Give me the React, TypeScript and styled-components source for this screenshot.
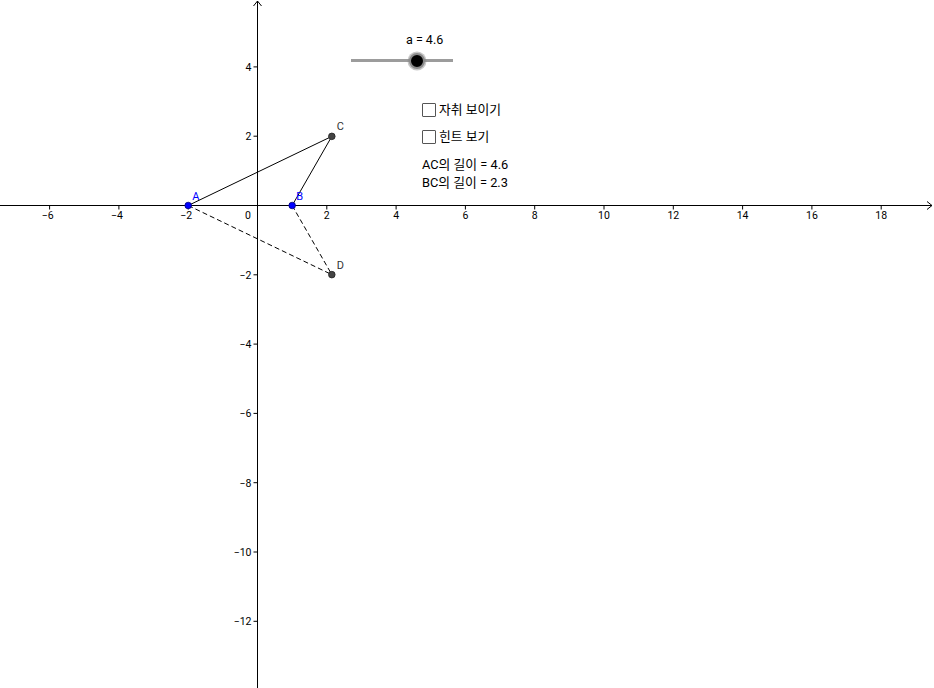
import React from "react"
import styled, { createGlobalStyle } from "styled-components"

const GlobalStyle = createGlobalStyle`
  html, body {
    margin: 0;
    padding: 0;
    background: #fff;
    overflow: hidden;
  }
  body {
    font-family: Roboto, "Noto Sans CJK KR", sans-serif;
  }
`

const Applet = styled.div`
  position: relative;
  width: 934px;
  height: 688px;
  background: #fff;
  overflow: hidden;
`

const Board = styled.svg`
  display: block;
  font-family: Roboto, "Noto Sans CJK KR", sans-serif;
`

const Widget = styled.div<{ $x: number; $y: number }>`
  position: absolute;
  left: ${({ $x }) => $x}px;
  top: ${({ $y }) => $y}px;
  font-size: 12.5px;
  color: #000;
  line-height: 14px;
  white-space: nowrap;
`

const SliderLabel = styled.div`
  padding-left: 55px;
  margin-bottom: 12px;
`

const SliderTrack = styled.div`
  position: relative;
  width: 102px;
  height: 3px;
  background: #9c9c9c;
`

const SliderKnob = styled.div`
  position: absolute;
  top: 50%;
  width: 12px;
  height: 12px;
  border-radius: 50%;
  background: #000;
  border: 2px solid #8a8a8a;
  box-shadow: 0 0 0 1.5px rgba(130, 130, 130, 0.45);
  transform: translate(-50%, -50%);
`

const CheckRow = styled.label`
  display: flex;
  align-items: center;
  gap: 3px;
  font-size: 12.8px;
`

const Box = styled.span`
  display: inline-block;
  width: 12px;
  height: 12px;
  border: 1px solid #555;
  border-radius: 1px;
  background: #fff;
`

const InfoList = styled.div`
  display: flex;
  flex-direction: column;
  gap: 4px;
  font-size: 12.8px;
`

// graph coords
const ox = 257.5
const oy = 205.5
const s = 34.65
const px = (x: number) => ox + x * s
const py = (y: number) => oy - y * s

const fmt = (n: number) => (n < 0 ? "\u2212" + Math.abs(n) : String(n))

const A = { x: -2, y: 0 }
const B = { x: 1, y: 0 }
const C = { x: 2.145, y: 1.995 }
const D = { x: 2.145, y: -1.995 }

export default function App() {
  const xTicks: number[] = []
  for (let k = -6; k <= 18; k += 2) if (k !== 0) xTicks.push(k)
  const yTicks: number[] = []
  for (let k = 4; k >= -12; k -= 2) if (k !== 0) yTicks.push(k)

  const knobPos = 66

  return (
    <Applet>
      <GlobalStyle />
      <Board width={934} height={688} viewBox="0 0 934 688">
        {/* axes */}
        <line x1={0} y1={oy} x2={932} y2={oy} stroke="#000" strokeWidth={1} />
        <line x1={ox} y1={1} x2={ox} y2={688} stroke="#000" strokeWidth={1} />
        <polyline points={`927,${oy - 4} 932,${oy} 927,${oy + 4}`} fill="none" stroke="#000" strokeWidth={1} />
        <polyline points={`${ox - 4},6 ${ox},1 ${ox + 4},6`} fill="none" stroke="#000" strokeWidth={1} />

        {xTicks.map((k) => (
          <g key={"x" + k}>
            <line x1={px(k)} y1={oy} x2={px(k)} y2={oy + 4} stroke="#000" strokeWidth={1} />
            <text x={px(k) - (k < 0 ? 2 : 0)} y={oy + 13} fontSize={10.5} textAnchor="middle" fill="#000">
              {fmt(k)}
            </text>
          </g>
        ))}
        <text x={248} y={oy + 13} fontSize={10.5} textAnchor="middle" fill="#000">0</text>

        {yTicks.map((k) => (
          <g key={"y" + k}>
            <line x1={ox - 4} y1={py(k)} x2={ox} y2={py(k)} stroke="#000" strokeWidth={1} />
            <text x={ox - 6} y={py(k) + 4} fontSize={10.5} textAnchor="end" fill="#000">
              {fmt(k)}
            </text>
          </g>
        ))}

        {/* segments */}
        <line x1={px(A.x)} y1={py(A.y)} x2={px(C.x)} y2={py(C.y)} stroke="#000" strokeWidth={1} />
        <line x1={px(B.x)} y1={py(B.y)} x2={px(C.x)} y2={py(C.y)} stroke="#000" strokeWidth={1} />
        <line x1={px(A.x)} y1={py(A.y)} x2={px(D.x)} y2={py(D.y)} stroke="#000" strokeWidth={1} strokeDasharray="5 3" />
        <line x1={px(B.x)} y1={py(B.y)} x2={px(D.x)} y2={py(D.y)} stroke="#000" strokeWidth={1} strokeDasharray="5 3" />

        {/* points */}
        <circle cx={px(C.x)} cy={py(C.y)} r={3.3} fill="#444" stroke="#222" strokeWidth={0.8} />
        <circle cx={px(D.x)} cy={py(D.y)} r={3.3} fill="#444" stroke="#222" strokeWidth={0.8} />
        <circle cx={px(A.x)} cy={py(A.y)} r={3.3} fill="#0000ff" stroke="#00007a" strokeWidth={0.8} />
        <circle cx={px(B.x)} cy={py(B.y)} r={3.3} fill="#0000ff" stroke="#00007a" strokeWidth={0.8} />

        <text x={px(C.x) + 5} y={py(C.y) - 6} fontSize={11} fill="#333">C</text>
        <text x={px(D.x) + 5} y={py(D.y) - 6} fontSize={11} fill="#333">D</text>
        <text x={px(A.x) + 4} y={py(A.y) - 6} fontSize={11} fill="#0000ff">A</text>
        <text x={px(B.x) + 4} y={py(B.y) - 6} fontSize={11} fill="#0000ff">B</text>
      </Board>

      <Widget $x={351} $y={33}>
        <SliderLabel>a = 4.6</SliderLabel>
        <SliderTrack>
          <SliderKnob style={{ left: knobPos }} />
        </SliderTrack>
      </Widget>

      <Widget $x={422} $y={103}>
        <CheckRow>
          <Box />
          자취 보이기
        </CheckRow>
      </Widget>
      <Widget $x={422} $y={130}>
        <CheckRow>
          <Box />
          힌트 보기
        </CheckRow>
      </Widget>

      <Widget $x={422} $y={158}>
        <InfoList>
          <span>AC의 길이 = 4.6</span>
          <span>BC의 길이 = 2.3</span>
        </InfoList>
      </Widget>
    </Applet>
  )
}
